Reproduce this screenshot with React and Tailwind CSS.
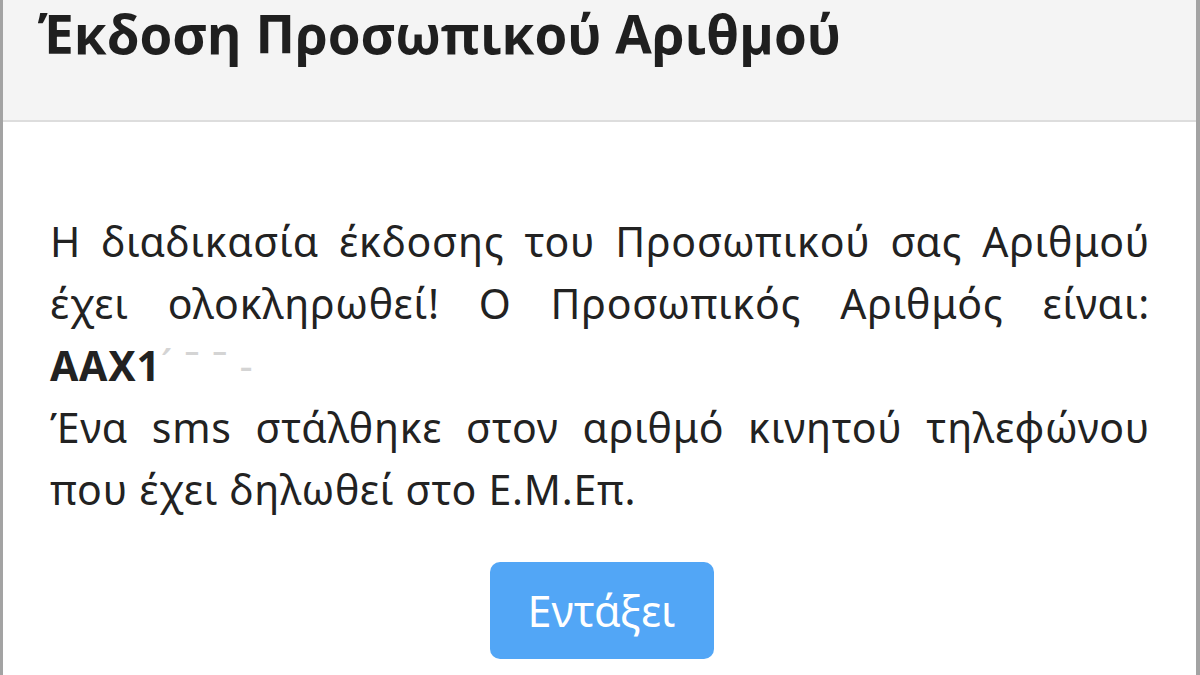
import React from "react";

const Line = ({ children, last }) => (
  <p className={last ? "text-left" : "text-justify [text-align-last:justify]"}>{children}</p>
);

const App = () => {
  return (
    <div className="w-[1200px] h-[675px] overflow-hidden bg-white">
      <div className="w-[1200px] h-[675px] border-l-[3px] border-r-[4px] border-x-[#a3a3a3] flex flex-col">
        <div className="h-[122px] bg-[#f4f4f4] border-b-2 border-b-[#dddddd] pl-[35px] pt-[4px]">
          <h1 className="text-[53px] leading-[60px] font-bold text-[#1f1f1f] font-['Open_Sans',sans-serif]">
            Έκδοση Προσωπικού Αριθμού
          </h1>
        </div>
        <div className="flex-1 pl-[47px] pr-[46px] pt-[88px] font-['Noto_Sans',sans-serif] text-[41px] leading-[62px] tracking-[0.75px] text-[#222222]">
          <Line>Η διαδικασία έκδοσης του Προσωπικού σας Αριθμού</Line>
          <Line>έχει ολοκληρωθεί! Ο Προσωπικός Αριθμός είναι:</Line>
          <p className="font-bold">
            AAX1<span className="font-normal text-[#d4d4d4]">´ ˉ ˉ -</span>
          </p>
          <Line>Ένα sms στάλθηκε στον αριθμό κινητού τηλεφώνου</Line>
          <Line last>που έχει δηλωθεί στο Ε.Μ.Επ.</Line>
          <div className="flex justify-center mt-[42px] pl-[3px]">
            <button className="w-[224px] h-[97px] rounded-[10px] bg-[#52a6f6] text-white text-[43px] font-normal tracking-normal">
              Εντάξει
            </button>
          </div>
        </div>
      </div>
    </div>
  );
};

export default App;
